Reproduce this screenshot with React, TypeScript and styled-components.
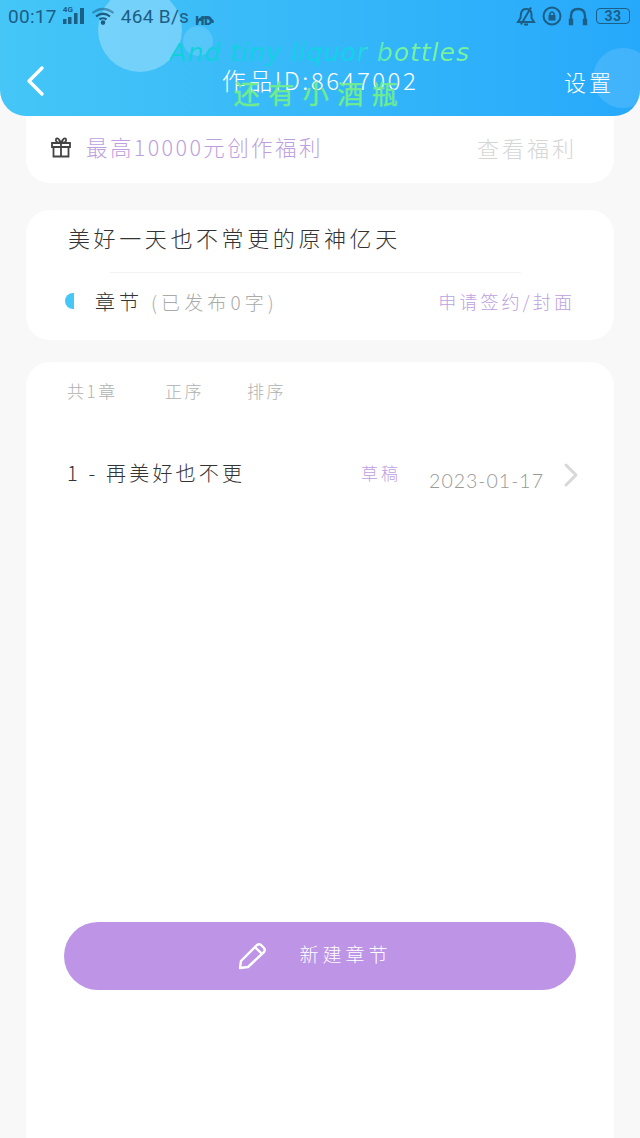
import * as React from "react";
import styled, { createGlobalStyle } from "styled-components";

const GlobalStyle = createGlobalStyle`
  html, body {
    margin: 0;
    padding: 0;
    background: #f8f8f8;
  }
  * {
    box-sizing: border-box;
  }
`;

const CJK = `"Noto Sans CJK SC", "Noto Sans", sans-serif`;
const PURPLE = "#bd9fe0";

const Page = styled.div`
  width: 640px;
  height: 1138px;
  overflow: hidden;
  background: #f8f8f8;
  font-family: ${CJK};
`;

const Header = styled.header`
  position: relative;
  height: 116px;
  overflow: hidden;
  border-radius: 0 0 26px 26px;
  background: linear-gradient(90deg, #45c6f7, #27a9fb);
`;

const Bubble = styled.div<{ $size: number; $left: number; $top: number; $alpha: number }>`
  position: absolute;
  width: ${(p) => p.$size}px;
  height: ${(p) => p.$size}px;
  left: ${(p) => p.$left}px;
  top: ${(p) => p.$top}px;
  border-radius: 50%;
  background: rgba(255, 255, 255, ${(p) => p.$alpha});
`;

const StatusBar = styled.div`
  position: relative;
  height: 32px;
  padding: 0 10px 0 8px;
  display: flex;
  align-items: center;
  color: #1b5e86;
  font-family: "Roboto", sans-serif;
  font-size: 19px;
  letter-spacing: 0.3px;
`;

const StatusGroup = styled.div`
  display: flex;
  align-items: center;
  gap: 6px;
`;

const StatusRight = styled(StatusGroup)`
  margin-left: auto;
`;

const Signal = styled.div`
  position: relative;
  width: 22px;
  height: 18px;
`;

const SignalLabel = styled.span`
  position: absolute;
  left: 0;
  top: -2px;
  font-size: 8px;
  font-weight: 700;
  line-height: 9px;
  letter-spacing: 0;
`;

const HdIcon = styled.div`
  position: relative;
  width: 20px;
  height: 20px;
`;

const HdLabel = styled.span`
  position: absolute;
  left: 0;
  top: 9px;
  font-size: 13px;
  font-weight: 900;
  line-height: 11px;
  letter-spacing: -0.3px;
`;

const Battery = styled.div`
  width: 34px;
  height: 16px;
  margin-left: 2px;
  border: 1.5px solid #1b5e86;
  border-radius: 4px;
  display: flex;
  align-items: center;
  justify-content: center;
  font-size: 14px;
  font-weight: 700;
  letter-spacing: 0.4px;
`;

const NavBar = styled.div`
  position: relative;
  height: 84px;
  padding: 0 26px 0 26px;
  display: flex;
  align-items: center;
  justify-content: space-between;
  color: #fff;
`;

const NavTitle = styled.div`
  position: absolute;
  left: 0;
  right: 0;
  top: 32px;
  text-align: center;
  font-size: 24px;
  line-height: 32px;
  font-weight: 300;
  letter-spacing: 2.5px;
`;

const NavAction = styled.span`
  font-size: 22px;
  letter-spacing: 3px;
  margin-top: 14px;
  font-weight: 300;
`;

const BackIcon = styled.svg`
  margin-top: 14px;
`;

const LyricLine = styled.div<{ $top: number; $size: number }>`
  position: absolute;
  left: 0;
  right: 0;
  top: ${(p) => p.$top}px;
  text-align: center;
  font-size: ${(p) => p.$size}px;
  line-height: 34px;
  white-space: nowrap;
`;

const LyricEnglish = styled.span`
  font-family: "DejaVu Sans", sans-serif;
  font-style: italic;
  letter-spacing: 1px;
  background: linear-gradient(90deg, #10d0d8 0%, #10d4e8 62%, #78f49c 74%);
  -webkit-background-clip: text;
  background-clip: text;
  color: transparent;
`;

const LyricChinese = styled.span`
  color: #70ec8e;
  letter-spacing: 8.5px;
  -webkit-text-stroke: 0.4px #70ec8e;
`;

const Content = styled.main`
  padding: 0 26px;
  display: flex;
  flex-direction: column;
`;

const Card = styled.section<{ $flush?: boolean }>`
  background: #fff;
  border-radius: ${(p) => (p.$flush ? "0 0 24px 24px" : "24px")};
`;

const BenefitCard = styled(Card)`
  height: 67px;
  padding: 0 37px 6px 25px;
  display: flex;
  align-items: center;
`;

const BenefitText = styled.span`
  margin-left: 15px;
  font-size: 21.5px;
  font-weight: 300;
  letter-spacing: 2.4px;
  color: ${PURPLE};
`;

const BenefitLink = styled.span`
  margin-left: auto;
  font-size: 22px;
  font-weight: 300;
  letter-spacing: 3px;
  color: #d6d6d6;
`;

const WorkCard = styled(Card)`
  margin-top: 27px;
  height: 130px;
  padding: 0 39px;
`;

const WorkTitle = styled.div`
  height: 62px;
  display: flex;
  align-items: center;
  padding: 0 0 8px 3px;
  font-size: 22px;
  font-weight: 300;
  letter-spacing: 3.6px;
  color: #333;
`;

const Divider = styled.div`
  height: 1px;
  margin: 0 54px 0 45px;
  background: #f2f2f2;
`;

const ChapterRow = styled.div`
  height: 56px;
  display: flex;
  align-items: center;
`;

const HalfDot = styled.i`
  width: 9px;
  height: 16px;
  border-radius: 8px 0 0 8px;
  background: #45c8f5;
`;

const ChapterName = styled.span`
  margin-left: 21px;
  font-size: 20px;
  font-weight: 300;
  letter-spacing: 4px;
  color: #333;
`;

const ChapterCount = styled.span`
  margin-left: 8px;
  font-size: 19px;
  font-weight: 300;
  letter-spacing: 4.1px;
  color: #aaa;
`;

const ChapterLink = styled.span`
  margin-left: auto;
  font-size: 18px;
  font-weight: 300;
  letter-spacing: 3.1px;
  color: ${PURPLE};
`;

const ListCard = styled(Card)`
  position: relative;
  margin-top: 22px;
  height: 800px;
  padding: 15px 35px 0 41px;
`;

const ListMeta = styled.div`
  height: 26px;
  display: flex;
  align-items: center;
  font-size: 17px;
  font-weight: 300;
  letter-spacing: 2.6px;
  color: #b0b0b0;
`;

const MetaItem = styled.span<{ $width: number }>`
  width: ${(p) => p.$width}px;
`;

const ChapterItem = styled.div`
  margin-top: 45px;
  height: 48px;
  display: flex;
  align-items: center;
`;

const ItemTitle = styled.span`
  font-size: 20px;
  font-weight: 300;
  letter-spacing: 3.2px;
  color: #333;
`;

const ItemState = styled.span`
  margin-left: auto;
  font-size: 17px;
  font-weight: 300;
  letter-spacing: 3px;
  color: ${PURPLE};
`;

const ItemDate = styled.span`
  margin: 16px 0 0 28px;
  font-family: "Lato", "Noto Sans", sans-serif;
  font-size: 19.5px;
  font-weight: 300;
  letter-spacing: 1px;
  color: #999;
`;

const ItemArrow = styled.svg`
  margin: 6px 0 0 19px;
`;

const CreateButton = styled.button`
  position: absolute;
  left: 38px;
  right: 38px;
  top: 560px;
  height: 68px;
  padding: 0 10px 0 0;
  border: 0;
  border-radius: 34px;
  background: #bd94e6;
  display: flex;
  align-items: center;
  justify-content: center;
  gap: 31px;
  color: #fff;
  font-family: ${CJK};
  font-size: 19px;
  font-weight: 300;
  letter-spacing: 4px;
`;

const ButtonLabel = styled.span`
  margin-bottom: 5px;
`;

export default function App() {
  return (
    <Page>
      <GlobalStyle />
      <Header>
        <Bubble $size={84} $left={98} $top={-12} $alpha={0.28} />
        <Bubble $size={30} $left={183} $top={26} $alpha={0.14} />
        <Bubble $size={60} $left={593} $top={48} $alpha={0.12} />
        <StatusBar>
          <StatusGroup>
            <span>00:17</span>
            <Signal>
              <SignalLabel>4G</SignalLabel>
              <svg width="22" height="18" viewBox="0 0 22 18" fill="currentColor">
                <rect x="0" y="12" width="3.500" height="5" />
                <rect x="5" y="10" width="3.500" height="7" />
                <rect x="11" y="6" width="3.500" height="11" />
                <rect x="17" y="1" width="4" height="16" />
              </svg>
            </Signal>
            <svg width="24" height="18" viewBox="0 0 24 18" fill="none" stroke="currentColor" strokeWidth="2.200">
              <path d="M1.500 6Q12-2 22.500 6" opacity=".55" />
              <path d="M5 9.500Q12 4 19 9.500" />
              <path d="M8.500 12.500Q12 10 15.500 12.500" />
              <circle cx="12" cy="15.600" r="1.200" fill="currentColor" />
            </svg>
            <span>464 B/s</span>
            <HdIcon>
              <svg width="20" height="9" viewBox="0 0 20 9" fill="none" stroke="currentColor" strokeWidth="2.400">
                <path d="M2.500 8V6Q10-1 17.500 6V8" />
              </svg>
              <HdLabel>HD</HdLabel>
            </HdIcon>
          </StatusGroup>
          <StatusRight>
            <svg width="20" height="20" viewBox="0 0 20 20" fill="none" stroke="currentColor" strokeWidth="2">
              <path d="M2 16H18L15.500 12V8Q15 3 10 3Q6 3 5 7.500L4.500 12Z" />
              <path d="M8 18.500H12" />
              <path d="M15 1.500L5 18.500" />
            </svg>
            <svg width="20" height="20" viewBox="0 0 20 20" fill="none" stroke="currentColor" strokeWidth="2">
              <circle cx="10" cy="10" r="8.500" />
              <rect x="6.500" y="9" width="7" height="5.500" fill="currentColor" stroke="none" />
              <path d="M8 9V7.500Q10 4.500 12 7.500V9" strokeWidth="1.500" />
            </svg>
            <svg width="20" height="20" viewBox="0 0 20 20" fill="none" stroke="currentColor" strokeWidth="2.400">
              <path d="M3 17V10Q3 3 10 3Q17 3 17 10V17" />
              <path d="M2 14H4V18H2ZM16 14H18V18H16Z" fill="currentColor" />
            </svg>
            <Battery>33</Battery>
          </StatusRight>
        </StatusBar>
        <NavBar>
          <BackIcon width="20" height="32" viewBox="0 0 20 32" fill="none" stroke="#fff" strokeWidth="3.400" strokeLinecap="round" strokeLinejoin="round">
            <path d="M16 3L3 16L16 29" />
          </BackIcon>
          <NavTitle>作品ID:8647002</NavTitle>
          <NavAction>设置</NavAction>
        </NavBar>
        <LyricLine $top={33} $size={25}>
          <LyricEnglish>And tiny liquor bottles</LyricEnglish>
        </LyricLine>
        <LyricLine $top={76} $size={26}>
          <LyricChinese>还有小酒瓶</LyricChinese>
        </LyricLine>
      </Header>
      <Content>
        <BenefitCard $flush>
          <svg width="20" height="22" viewBox="0 0 20 22" fill="none" stroke="#444" strokeWidth="1.800">
            <path d="M1 7H19V11H1ZM2.500 11V20.500H17.500V11M10 7V20.500" />
            <path d="M10 7Q4 7 5 3Q7 0.500 10 7Q13 0.500 15 3Q16 7 10 7Z" />
          </svg>
          <BenefitText>最高10000元创作福利</BenefitText>
          <BenefitLink>查看福利</BenefitLink>
        </BenefitCard>
        <WorkCard>
          <WorkTitle>美好一天也不常更的原神亿天</WorkTitle>
          <Divider />
          <ChapterRow>
            <HalfDot />
            <ChapterName>章节</ChapterName>
            <ChapterCount>(已发布0字)</ChapterCount>
            <ChapterLink>申请签约/封面</ChapterLink>
          </ChapterRow>
        </WorkCard>
        <ListCard>
          <ListMeta>
            <MetaItem $width={98}>共1章</MetaItem>
            <MetaItem $width={82}>正序</MetaItem>
            <MetaItem $width={60}>排序</MetaItem>
          </ListMeta>
          <ChapterItem>
            <ItemTitle>1 - 再美好也不更</ItemTitle>
            <ItemState>草稿</ItemState>
            <ItemDate>2023-01-17</ItemDate>
            <ItemArrow width="16" height="26" viewBox="0 0 16 26" fill="none" stroke="#d8d8d8" strokeWidth="3" strokeLinecap="round" strokeLinejoin="round">
              <path d="M3 3L13 13L3 23" />
            </ItemArrow>
          </ChapterItem>
          <CreateButton>
            <svg width="30" height="28" viewBox="0 0 30 28" fill="none" stroke="#fff" strokeWidth="2.400" strokeLinejoin="round">
              <path d="M2 26L3 19L19 3Q21 1.500 23 3L26 6Q27.500 8 26 10L10 25Z" />
              <path d="M17 5L24 12" />
            </svg>
            <ButtonLabel>新建章节</ButtonLabel>
          </CreateButton>
        </ListCard>
      </Content>
    </Page>
  );
}
